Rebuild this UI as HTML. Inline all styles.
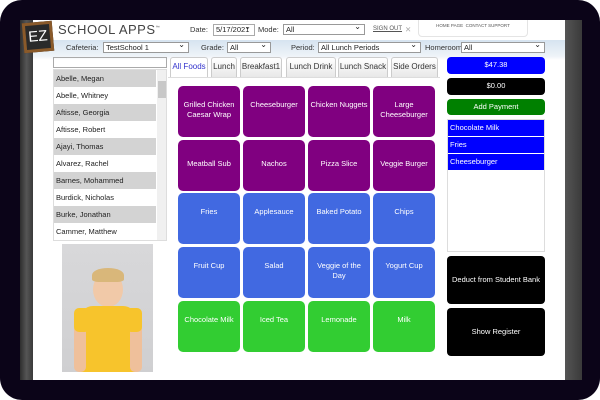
<!DOCTYPE html>
<html><head><meta charset="utf-8"><style>
*{box-sizing:border-box;margin:0;padding:0}
body{width:600px;height:400px;background:#fff;font-family:"Liberation Sans",sans-serif;position:relative;overflow:hidden}
.frame{position:absolute;left:0;top:0;width:600px;height:400px;background:#0b0418;border-radius:22px}
.screen{position:absolute;left:20px;top:20px;width:562px;height:360px;background:#fff;overflow:hidden}
.ls{position:absolute;left:0;top:0;width:13px;height:360px;background:linear-gradient(90deg,#2e2e2e,#555,#3a3a3a)}
.rs{position:absolute;left:545px;top:0;width:17px;height:360px;background:linear-gradient(90deg,#555,#3a3a3a)}
.abs{position:absolute}
.band{position:absolute;left:13px;top:20px;width:532px;height:20px;background:linear-gradient(#d6e3f0,#eef3f8 80%,#fff)}
.sel{position:absolute;height:11px;border:1px solid #999;background:#fff;font-size:7.5px;line-height:9px;padding-left:2px;color:#222;white-space:nowrap}
.sel:after{content:"⌄";position:absolute;right:3px;top:-3px;font-size:8px}
.lbl{position:absolute;font-size:7.5px;color:#333;line-height:11px;white-space:nowrap}
.tab{position:absolute;top:37px;height:20px;border:1px solid #ccc;border-bottom:none;border-radius:3px 3px 0 0;background:linear-gradient(#fff,#e8e8e8);font-size:8px;line-height:18px;text-align:center;color:#333;white-space:nowrap}
.cell{position:absolute;width:62px;height:51px;border-radius:5px;color:#fff;font-size:7.5px;text-align:center;padding:14px 1px 0;line-height:10px}
.p{background:#800080}.b{background:#4169e1}.g{background:#32cd32}
.row{height:17px;font-size:7.5px;line-height:17px;padding-left:2px;color:#222}
.row.s{background:#d3d3d3}
.btn{position:absolute;left:427px;width:98px;border-radius:4px;color:#fff;font-size:7.5px;text-align:center}
.it{height:16px;background:#0000ff;color:#fff;font-size:7.5px;line-height:15px;padding-left:2px;margin-bottom:1px}
</style></head><body>
<div class="frame"></div>
<div class="screen">
<div class="ls"></div><div class="rs"></div>
<div class="band"></div>
<div class="abs" style="left:3px;top:2px;width:30px;height:30px;background:#2a2a2a;border:3px solid #8a5a2a;transform:rotate(-5deg);color:#fff;font-size:15px;line-height:24px;text-align:center">EZ</div>
<div class="abs" style="left:38px;top:2px;font-size:13px;color:#444;letter-spacing:0.5px">SCHOOL APPS<sup style="font-size:4px">™</sup></div>
<div class="lbl" style="left:170px;top:4px">Date:</div>
<div class="sel" style="left:193px;top:4px;width:42px;height:12px;border-color:#aaa">5/17/2021</div>
<div class="lbl" style="left:238px;top:4px">Mode:</div>
<div class="sel" style="left:263px;top:4px;width:82px">All</div>
<div class="lbl" style="left:353px;top:4px;font-size:6px;text-decoration:underline;color:#555">SIGN OUT</div>
<div class="lbl" style="left:385px;top:4px;color:#aaa">✕</div>
<div class="abs" style="left:398px;top:-4px;width:110px;height:21px;border:1px solid #e4e4e4;border-radius:4px;font-size:4.5px;color:#555;text-align:center;padding-top:6px">HOME PAGE&nbsp; CONTACT SUPPORT</div>
<div class="lbl" style="left:46px;top:22px">Cafeteria:</div>
<div class="sel" style="left:83px;top:22px;width:86px">TestSchool 1</div>
<div class="lbl" style="left:181px;top:22px">Grade:</div>
<div class="sel" style="left:207px;top:22px;width:44px">All</div>
<div class="lbl" style="left:271px;top:22px">Period:</div>
<div class="sel" style="left:298px;top:22px;width:103px">All Lunch Periods</div>
<div class="lbl" style="left:405px;top:22px">Homeroom:</div>
<div class="sel" style="left:441px;top:22px;width:84px">All</div>
<div class="abs" style="left:33px;top:37px;width:114px;height:11px;border:1px solid #aaa"></div>
<div class="abs" style="left:33px;top:49px;width:114px;height:172px;border:1px solid #ddd;overflow:hidden">
<div style="width:102px">
<div class="row s">Abelle, Megan</div><div class="row">Abelle, Whitney</div><div class="row s">Aftisse, Georgia</div><div class="row">Aftisse, Robert</div><div class="row s">Ajayi, Thomas</div><div class="row">Alvarez, Rachel</div><div class="row s">Barnes, Mohammed</div><div class="row">Burdick, Nicholas</div><div class="row s">Burke, Jonathan</div><div class="row">Cammer, Matthew</div>
</div>
<div class="abs" style="left:103px;top:0;width:10px;height:172px;background:#f0f0f0"><div style="margin-top:11px;height:17px;background:#c8c8c8;margin-left:1px;width:8px"></div></div>
</div>
<div class="abs" style="left:42px;top:224px;width:91px;height:128px;background:linear-gradient(#d8d8da,#cfcfd1);overflow:hidden">
<div class="abs" style="left:31px;top:28px;width:30px;height:35px;border-radius:50%;background:#f1c9a8"></div>
<div class="abs" style="left:30px;top:24px;width:32px;height:14px;border-radius:50% 50% 20% 20%;background:#d9b77a"></div>
<div class="abs" style="left:17px;top:62px;width:58px;height:66px;border-radius:14px 14px 0 0;background:#f7c42c"></div>
<div class="abs" style="left:12px;top:70px;width:12px;height:58px;border-radius:5px;background:#efc09b"></div>
<div class="abs" style="left:68px;top:70px;width:12px;height:58px;border-radius:5px;background:#efc09b"></div>
<div class="abs" style="left:12px;top:64px;width:16px;height:24px;border-radius:5px;background:#f7c42c"></div>
<div class="abs" style="left:64px;top:64px;width:16px;height:24px;border-radius:5px;background:#f7c42c"></div>
</div>
<div class="tab" style="left:150px;width:38px;color:#33c;background:#fff">All Foods</div>
<div class="tab" style="left:191px;width:26px">Lunch</div>
<div class="tab" style="left:220px;width:42px">Breakfast1</div>
<div class="tab" style="left:266px;width:50px">Lunch Drink</div>
<div class="tab" style="left:318px;width:50px">Lunch Snack</div>
<div class="tab" style="left:371px;width:47px">Side Orders</div>
<div class="abs" style="left:148px;top:57px;width:272px;height:1px;background:#ddd"></div>
<div class="cell p" style="left:158px;top:66px">Grilled Chicken Caesar Wrap</div>
<div class="cell p" style="left:223px;top:66px">Cheeseburger</div>
<div class="cell p" style="left:288px;top:66px">Chicken Nuggets</div>
<div class="cell p" style="left:353px;top:66px">Large Cheeseburger</div>
<div class="cell p" style="left:158px;top:120px;padding-top:19px">Meatball Sub</div>
<div class="cell p" style="left:223px;top:120px;padding-top:19px">Nachos</div>
<div class="cell p" style="left:288px;top:120px;padding-top:19px">Pizza Slice</div>
<div class="cell p" style="left:353px;top:120px;padding-top:19px">Veggie Burger</div>
<div class="cell b" style="left:158px;top:173px">Fries</div>
<div class="cell b" style="left:223px;top:173px">Applesauce</div>
<div class="cell b" style="left:288px;top:173px">Baked Potato</div>
<div class="cell b" style="left:353px;top:173px">Chips</div>
<div class="cell b" style="left:158px;top:227px">Fruit Cup</div>
<div class="cell b" style="left:223px;top:227px">Salad</div>
<div class="cell b" style="left:288px;top:227px;padding:14px 6px 0">Veggie of the Day</div>
<div class="cell b" style="left:353px;top:227px">Yogurt Cup</div>
<div class="cell g" style="left:158px;top:281px">Chocolate Milk</div>
<div class="cell g" style="left:223px;top:281px">Iced Tea</div>
<div class="cell g" style="left:288px;top:281px">Lemonade</div>
<div class="cell g" style="left:353px;top:281px">Milk</div>
<div class="btn" style="top:37px;height:17px;line-height:16px;background:#0000ff">$47.38</div>
<div class="btn" style="top:58px;height:17px;line-height:16px;background:#000">$0.00</div>
<div class="btn" style="top:79px;height:16px;line-height:15px;background:#008000">Add Payment</div>
<div class="abs" style="left:427px;top:99px;width:98px;height:133px;border:1px solid #ddd">
<div class="it">Chocolate Milk</div><div class="it">Fries</div><div class="it">Cheeseburger</div></div>
<div class="btn" style="top:236px;height:48px;line-height:48px;background:#000;white-space:nowrap">Deduct from Student Bank</div>
<div class="btn" style="top:288px;height:48px;line-height:48px;background:#000">Show Register</div>
</div>
</body></html>
